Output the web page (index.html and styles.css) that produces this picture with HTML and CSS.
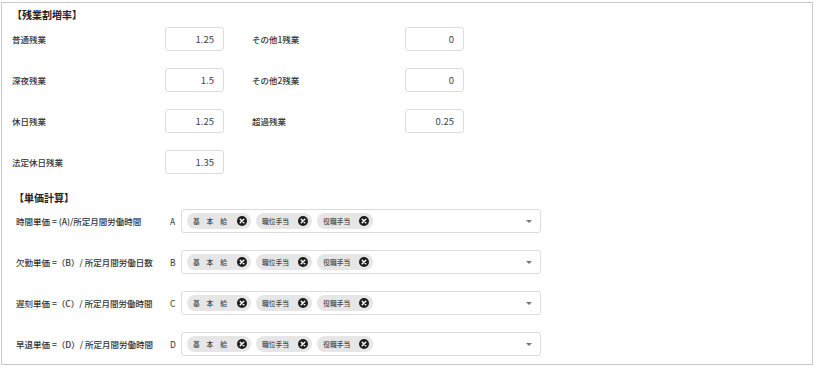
FILE: index.html
```html
<!doctype html>
<html lang="ja">
  <head>
    <meta charset="UTF-8" />
    <meta name="viewport" content="width=device-width, initial-scale=1.0" />
    <title>残業割増率・単価計算</title>
    <link rel="stylesheet" href="styles.css">
  </head>
  <body>
    <main class="Panel">
      <h2 class="Panel-title">【残業割増率】</h2>
      <div class="RateGrid">
        <div class="Field">
          <span class="Field-label">普通残業</span>
          <input class="Field-input" type="text" value="1.25" />
        </div>
        <div class="Field">
          <span class="Field-label">その他1残業</span>
          <input class="Field-input" type="text" value="0" />
        </div>
        <div class="Field">
          <span class="Field-label">深夜残業</span>
          <input class="Field-input" type="text" value="1.5" />
        </div>
        <div class="Field">
          <span class="Field-label">その他2残業</span>
          <input class="Field-input" type="text" value="0" />
        </div>
        <div class="Field">
          <span class="Field-label">休日残業</span>
          <input class="Field-input" type="text" value="1.25" />
        </div>
        <div class="Field">
          <span class="Field-label">超過残業</span>
          <input class="Field-input" type="text" value="0.25" />
        </div>
        <div class="Field">
          <span class="Field-label">法定休日残業</span>
          <input class="Field-input" type="text" value="1.35" />
        </div>
      </div>

      <h2 class="Panel-title Panel-title--calc">【単価計算】</h2>
      <div class="CalcList">
        <div class="CalcRow">
          <span class="CalcRow-label">時間単価 = (A)/所定月間労働時間</span>
          <span class="CalcRow-key">A</span>
          <div class="TagSelect">
            <span class="Tag">基　本　給<i class="Tag-remove"><svg viewBox="0 0 10 10"><circle cx="5" cy="5" r="5" /><path d="M3.2 3.2l3.6 3.6M6.8 3.2l-3.6 3.6" /></svg></i></span>
            <span class="Tag">職位手当<i class="Tag-remove"><svg viewBox="0 0 10 10"><circle cx="5" cy="5" r="5" /><path d="M3.2 3.2l3.6 3.6M6.8 3.2l-3.6 3.6" /></svg></i></span>
            <span class="Tag">役職手当<i class="Tag-remove"><svg viewBox="0 0 10 10"><circle cx="5" cy="5" r="5" /><path d="M3.2 3.2l3.6 3.6M6.8 3.2l-3.6 3.6" /></svg></i></span>
            <span class="TagSelect-arrow"></span>
          </div>
        </div>
        <div class="CalcRow">
          <span class="CalcRow-label">欠勤単価 =（B）/ 所定月間労働日数</span>
          <span class="CalcRow-key">B</span>
          <div class="TagSelect">
            <span class="Tag">基　本　給<i class="Tag-remove"><svg viewBox="0 0 10 10"><circle cx="5" cy="5" r="5" /><path d="M3.2 3.2l3.6 3.6M6.8 3.2l-3.6 3.6" /></svg></i></span>
            <span class="Tag">職位手当<i class="Tag-remove"><svg viewBox="0 0 10 10"><circle cx="5" cy="5" r="5" /><path d="M3.2 3.2l3.6 3.6M6.8 3.2l-3.6 3.6" /></svg></i></span>
            <span class="Tag">役職手当<i class="Tag-remove"><svg viewBox="0 0 10 10"><circle cx="5" cy="5" r="5" /><path d="M3.2 3.2l3.6 3.6M6.8 3.2l-3.6 3.6" /></svg></i></span>
            <span class="TagSelect-arrow"></span>
          </div>
        </div>
        <div class="CalcRow">
          <span class="CalcRow-label">遅刻単価 =（C）/ 所定月間労働時間</span>
          <span class="CalcRow-key">C</span>
          <div class="TagSelect">
            <span class="Tag">基　本　給<i class="Tag-remove"><svg viewBox="0 0 10 10"><circle cx="5" cy="5" r="5" /><path d="M3.2 3.2l3.6 3.6M6.8 3.2l-3.6 3.6" /></svg></i></span>
            <span class="Tag">職位手当<i class="Tag-remove"><svg viewBox="0 0 10 10"><circle cx="5" cy="5" r="5" /><path d="M3.2 3.2l3.6 3.6M6.8 3.2l-3.6 3.6" /></svg></i></span>
            <span class="Tag">役職手当<i class="Tag-remove"><svg viewBox="0 0 10 10"><circle cx="5" cy="5" r="5" /><path d="M3.2 3.2l3.6 3.6M6.8 3.2l-3.6 3.6" /></svg></i></span>
            <span class="TagSelect-arrow"></span>
          </div>
        </div>
        <div class="CalcRow">
          <span class="CalcRow-label">早退単価 =（D）/ 所定月間労働時間</span>
          <span class="CalcRow-key">D</span>
          <div class="TagSelect">
            <span class="Tag">基　本　給<i class="Tag-remove"><svg viewBox="0 0 10 10"><circle cx="5" cy="5" r="5" /><path d="M3.2 3.2l3.6 3.6M6.8 3.2l-3.6 3.6" /></svg></i></span>
            <span class="Tag">職位手当<i class="Tag-remove"><svg viewBox="0 0 10 10"><circle cx="5" cy="5" r="5" /><path d="M3.2 3.2l3.6 3.6M6.8 3.2l-3.6 3.6" /></svg></i></span>
            <span class="Tag">役職手当<i class="Tag-remove"><svg viewBox="0 0 10 10"><circle cx="5" cy="5" r="5" /><path d="M3.2 3.2l3.6 3.6M6.8 3.2l-3.6 3.6" /></svg></i></span>
            <span class="TagSelect-arrow"></span>
          </div>
        </div>
      </div>
    </main>
  </body>
</html>
```

FILE: styles.css
```css
:root {
  --color-text: #333;
  --color-border: #c9c9c9;
  --color-field: #dcdcdc;
  --color-tag: #e6e6e6;
}

body {
  margin: 0;
  font-family: "Noto Sans CJK JP", "Noto Sans", sans-serif;
  color: var(--color-text);
  background-color: #fff;
}

.Panel {
  margin: 2px 3px 0 1px;
  padding: 5px 10px 8px 10px;
  border: 1px solid var(--color-border);
}

.Panel-title {
  margin: 0 0 5px;
  font-size: 10px;
  line-height: 14px;
  font-weight: 700;
  color: #222;
}

.Panel-title--calc {
  margin: 17px 0 4px 2px;
}

/* rates */
.RateGrid {
  display: grid;
  grid-template-columns: 212px 213px;
  column-gap: 28px;
  row-gap: 17px;
}

.Field {
  display: grid;
  grid-template-columns: 153px 59px;
  align-items: center;
}

.Field-label {
  font-size: 8.5px;
  font-weight: 500;
}

.Field-input {
  width: 59px;
  height: 24px;
  box-sizing: border-box;
  padding: 0 9px 0 4px;
  border: 1px solid var(--color-field);
  border-radius: 3px;
  font-family: inherit;
  font-size: 9.5px;
  color: #444;
  text-align: right;
  outline: none;
}

/* unit price */
.CalcList {
  display: flex;
  flex-direction: column;
  gap: 17px;
  padding-left: 4px;
}

.CalcRow {
  display: flex;
  align-items: center;
}

.CalcRow-label {
  width: 154px;
  font-size: 8.5px;
  font-weight: 500;
  white-space: nowrap;
}

.CalcRow-key {
  width: 11px;
  font-size: 8.5px;
}

.TagSelect {
  position: relative;
  display: flex;
  align-items: center;
  gap: 5px;
  width: 360px;
  height: 24px;
  box-sizing: border-box;
  padding: 0 5px;
  border: 1px solid var(--color-field);
  border-radius: 3px;
}

.Tag {
  display: inline-flex;
  align-items: center;
  gap: 9px;
  height: 16px;
  padding: 0 4px 0 6px;
  border-radius: 8px;
  background-color: var(--color-tag);
  font-size: 6.8px;
  font-weight: 500;
  color: #444;
  white-space: nowrap;
}

.Tag:first-child {
  gap: 10px;
}

.Tag-remove {
  display: block;
  width: 10px;
  height: 10px;
}

.Tag-remove svg {
  display: block;
  width: 10px;
  height: 10px;
}

.Tag-remove circle {
  fill: #1c1c1c;
}

.Tag-remove path {
  stroke: #fff;
  stroke-width: 1.4;
  stroke-linecap: round;
}

.TagSelect-arrow {
  margin-left: auto;
  margin-right: 3px;
  width: 0;
  height: 0;
  border-left: 3px solid transparent;
  border-right: 3px solid transparent;
  border-top: 3px solid #777;
}
```
